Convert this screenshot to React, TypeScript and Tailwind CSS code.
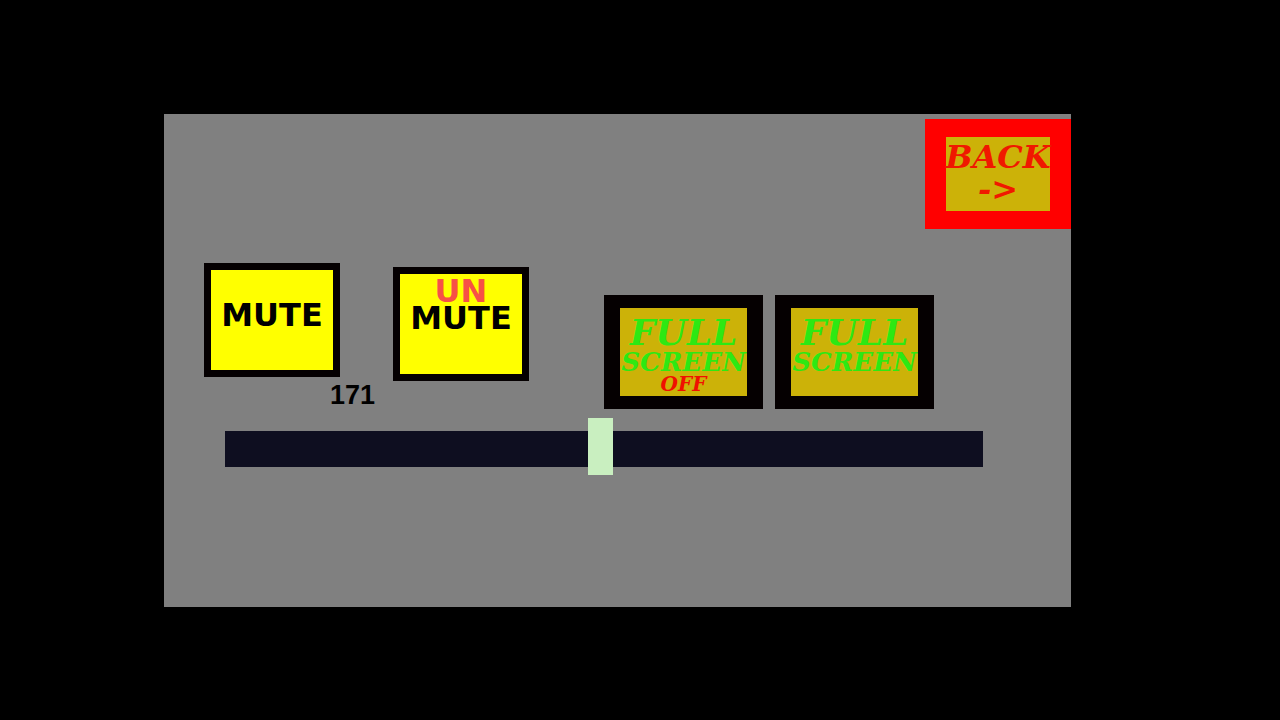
import React, { useState } from 'react';
import { clsx } from 'clsx';

const MAX_VOLUME = 345;

interface ScriptButtonProps {
  label: string;
  off?: boolean;
  onClick: () => void;
}

function ScriptButton({ label, off = false, onClick }: ScriptButtonProps) {
  return (
    <button
      type="button"
      aria-label={label}
      onClick={onClick}
      className="flex h-[114px] w-[159px] flex-col items-center border-x-16 border-y-13 border-[#050001] bg-[#ccb208] pt-2 font-['DejaVu_Serif',serif] font-bold italic whitespace-nowrap text-[#2ee813]"
    >
      <span className="text-4xl leading-8">FULL</span>
      <span className="text-[26px] leading-7">SCREEN</span>
      {off && <span className="text-xl leading-4 text-[#f01000]">OFF</span>}
    </button>
  );
}

interface SoundButtonProps {
  unmute?: boolean;
  onClick: () => void;
}

function SoundButton({ unmute = false, onClick }: SoundButtonProps) {
  return (
    <button
      type="button"
      onClick={onClick}
      className={clsx(
        "flex h-[114px] w-[136px] flex-col items-center border-7 border-[#050001] bg-[#ffff00] font-['DejaVu_Sans',sans-serif] text-[32px] leading-[27px] font-bold text-black",
        unmute ? 'mt-1 pt-1' : 'pt-8'
      )}
    >
      {unmute && <span className="text-[#f75046]">UN</span>}
      <span>MUTE</span>
    </button>
  );
}

export default function App() {
  const [volume, setVolume] = useState(171);
  const [muted, setMuted] = useState(false);

  return (
    <div className="flex min-h-screen flex-col bg-black pt-[114px] pr-[209px] pb-[113px] pl-[164px]">
      <main className="flex flex-1 flex-col bg-[#808080]">
        <header className="flex justify-end pt-[5px]">
          <button
            type="button"
            onClick={() => window.history.back()}
            className="flex h-[110px] w-[146px] flex-col items-center border-x-21 border-y-18 border-[#ff0000] bg-[#ccb208] pt-1 font-['DejaVu_Serif',serif] text-[32px] leading-8 font-bold italic whitespace-nowrap text-[#f01800]"
          >
            <span>BACK</span>
            <span>-&gt;</span>
          </button>
        </header>

        <section className="flex items-start gap-[75px] pt-[34px] pl-10">
          {/* Sound controls with the current volume below */}
          <div className="shrink-0">
            <div className="flex items-start gap-[53px]">
              <SoundButton onClick={() => setMuted(true)} />
              <SoundButton unmute onClick={() => setMuted(false)} />
            </div>
            <output
              htmlFor="volume"
              className="block pl-[126px] font-['Liberation_Sans',sans-serif] text-[27px] leading-7 font-bold text-black"
            >
              {muted ? 0 : volume}
            </output>
          </div>

          <div className="flex shrink-0 gap-3 pt-8">
            <ScriptButton
              label="Full screen off"
              off
              onClick={() => document.exitFullscreen?.().catch(() => {})}
            />
            <ScriptButton
              label="Full screen"
              onClick={() => document.documentElement.requestFullscreen?.().catch(() => {})}
            />
          </div>
        </section>

        {/* Volume slider */}
        <div className="flex pt-[22px] pr-22 pl-[61px]">
          <input
            id="volume"
            type="range"
            aria-label="Volume"
            min={0}
            max={MAX_VOLUME}
            value={volume}
            onChange={(e) => setVolume(Number(e.target.value))}
            className="h-9 min-w-0 flex-1 appearance-none bg-[#0e0e20] [&::-webkit-slider-runnable-track]:h-9 [&::-webkit-slider-thumb]:-mt-[13px] [&::-webkit-slider-thumb]:h-[57px] [&::-webkit-slider-thumb]:w-[25px] [&::-webkit-slider-thumb]:appearance-none [&::-webkit-slider-thumb]:bg-[#c9efc0]"
          />
        </div>
      </main>
    </div>
  );
}
